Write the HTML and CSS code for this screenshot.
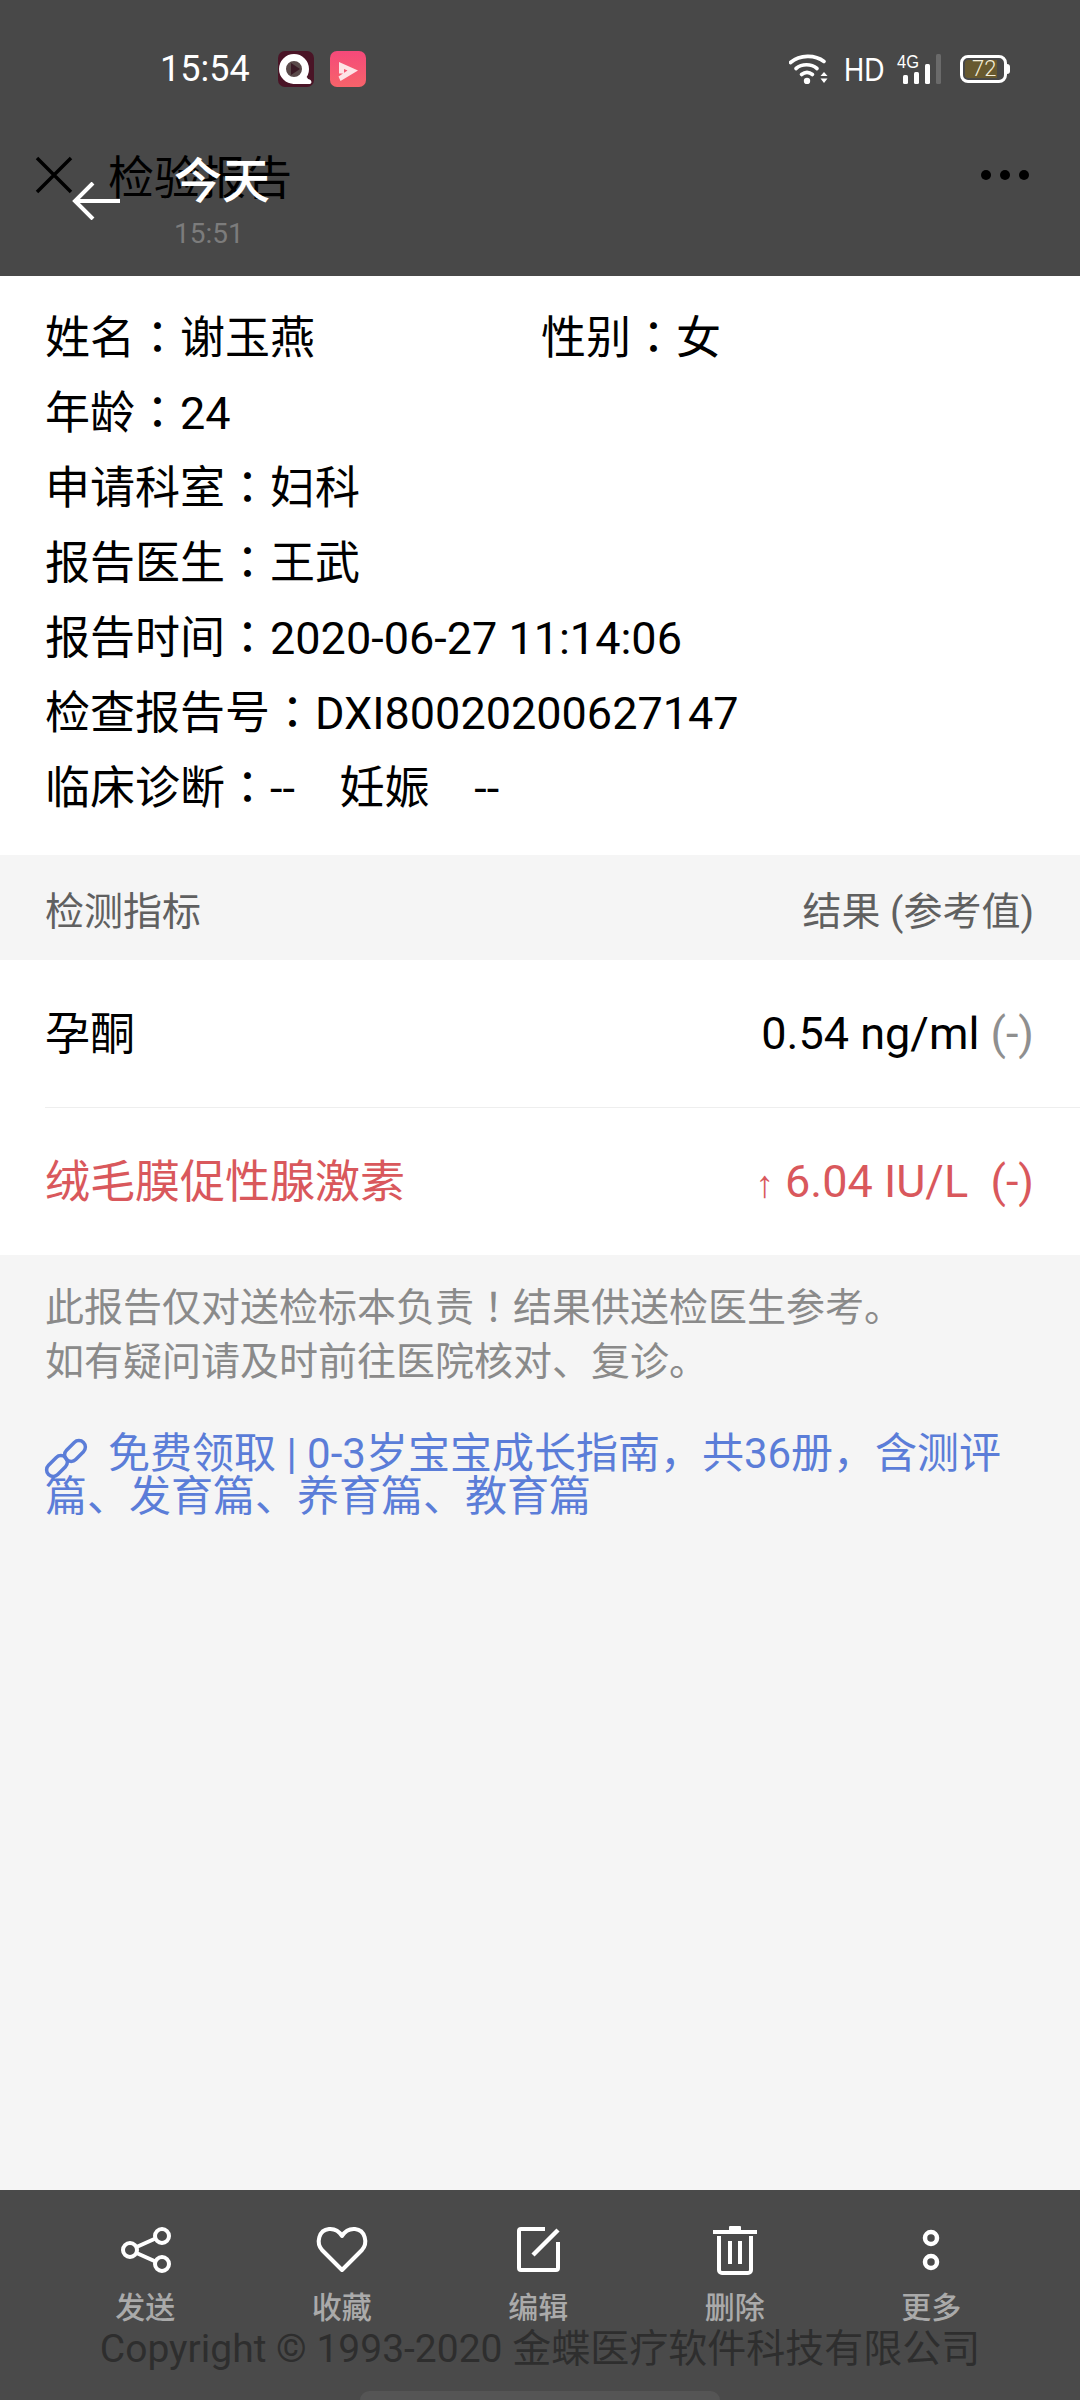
FILE: index.html
```html
<!DOCTYPE html>
<html lang="zh-CN">
<head>
<meta charset="utf-8">
<title>检验报告</title>
<link rel="stylesheet" href="styles.css">
</head>
<body>
<div class="app">
  <header class="top">
    <div class="status">
      <span class="time">15:54</span>
      <svg class="app-icon" viewBox="0 0 36 36"><rect width="36" height="36" rx="7" fill="#4a1426"/><circle cx="16" cy="18" r="11.500" fill="#5a4a4a" stroke="#fff" stroke-width="7"/><path d="M13 12l9 6-9 6z" fill="#3a1a25"/><path d="M15 33c-2-4 3-8 7-5 2-4 7-3 8 0 3 0 5 4 2 5z" fill="#fff"/></svg>
      <svg class="app-icon" viewBox="0 0 36 36"><defs><linearGradient id="pk" x1="0" y1="0" x2="0" y2="1"><stop offset="0" stop-color="#f5497a"/><stop offset="1" stop-color="#f7636a"/></linearGradient></defs><rect width="36" height="36" rx="7" fill="url(#pk)"/><path d="M9 11L28 19.500 10.500 30 8.500 25.500 17.500 19.500 14 18v4.500H9z" fill="#fde3e6"/></svg>
      <span class="status-right">
        <svg class="wifi" viewBox="0 0 40 30"><g fill="none" stroke="#fff" stroke-width="3.600" stroke-linecap="round"><path d="M1.500 8.500C11 .5 26 .5 35 7.500"/><path d="M7 14.500c6-5 15-5 21 0"/><path d="M12.500 20.500c3.500-2.800 7.500-2.800 11 0"/></g><circle cx="18" cy="27" r="3.200" fill="#fff"/><path d="M31.500 22l3.500-4 3.500 4zM31.500 24.500h7l-3.500 4.500z" fill="#fff"/></svg>
        <span class="hd">HD</span>
        <svg class="signal" viewBox="0 0 44 30"><text class="signal-text" x="0" y="14" textLength="22" lengthAdjust="spacingAndGlyphs">4G</text><g fill="#fff"><rect x="6" y="21" width="5" height="9" rx="1.500"/><rect x="17" y="18" width="5" height="12" rx="1.500"/><rect x="28" y="10" width="5" height="20" rx="1.500"/></g><rect x="39" y="0" width="5" height="30" rx="1.500" fill="#6a6a6a"/></svg>
        <span class="battery"><span class="battery-level">72</span></span>
      </span>
    </div>
    <span class="nav-close"><svg viewBox="0 0 38 38"><path d="M2 2l34 34M36 2L2 36" fill="none" stroke="#000" stroke-width="3.500"/></svg></span>
    <span class="nav-title">检验报告</span>
    <span class="nav-back"><svg viewBox="0 0 48 38"><path d="M48 19H3M21 1L3 19l18 18" fill="none" stroke="#fff" stroke-width="4"/></svg></span>
    <div class="today"><span class="today-title">今天</span><span class="today-time">15:51</span></div>
    <span class="nav-more"><i></i><i></i><i></i></span>
  </header>

  <main class="main">
    <section class="info">
      <div class="info-row info-split"><span class="info-half">姓名<span class="tc" lang="zh-TW">：</span>谢玉燕</span><span>性别<span class="tc" lang="zh-TW">：</span>女</span></div>
      <div class="info-row">年龄<span class="tc" lang="zh-TW">：</span>24</div>
      <div class="info-row">申请科室<span class="tc" lang="zh-TW">：</span>妇科</div>
      <div class="info-row">报告医生<span class="tc" lang="zh-TW">：</span>王武</div>
      <div class="info-row">报告时间<span class="tc" lang="zh-TW">：</span>2020-06-27 11:14:06</div>
      <div class="info-row">检查报告号<span class="tc" lang="zh-TW">：</span>DXI80020200627147</div>
      <div class="info-row">临床诊断<span class="tc" lang="zh-TW">：</span>--&nbsp;&nbsp;&nbsp;&nbsp;妊娠&nbsp;&nbsp;&nbsp;&nbsp;--</div>
    </section>

    <div class="table-head"><span>检测指标</span><span>结果 (参考值)</span></div>
    <section class="results">
      <div class="result"><span class="result-name">孕酮</span><span>0.54 ng/ml <span class="ref">(-)</span></span></div>
      <div class="result result-high"><span class="result-name">绒毛膜促性腺激素</span><span><span class="up">↑</span> 6.04 IU/L&nbsp;&nbsp;(-)</span></div>
    </section>

    <p class="note">此报告仅对送检标本负责<span class="tc" lang="zh-TW">！</span>结果供送检医生参考。<br>如有疑问请及时前往医院核对、复诊。</p>
    <p class="promo"><svg class="link-icon" viewBox="0 0 46 50"><g fill="none" stroke="#5b7dd8" stroke-width="3.500"><rect x="19" y="8.500" width="24" height="13" rx="6.500" transform="rotate(-45 31 15)"/><rect x="1" y="23.500" width="24" height="13" rx="6.500" transform="rotate(-45 13 30)"/></g></svg>免费领取 | 0-3岁宝宝成长指南，共36册，含测评篇、发育篇、养育篇、教育篇</p>
  </main>

  <footer class="bottom">
    <nav class="actions">
      <div class="action"><svg viewBox="0 0 56 56"><g fill="none" stroke="#fff" stroke-width="4"><circle cx="13" cy="28" r="7"/><circle cx="45" cy="14" r="7"/><circle cx="45" cy="42" r="7"/><path d="M19.500 25l19-8.500M19.500 31l19 8.500"/></g></svg><span>发送</span></div>
      <div class="action"><svg viewBox="0 0 56 56"><path d="M28 48L8 28C2 21 4.500 8 15 7c6-.5 10 2 13 7 3-5 7-7.500 13-7 10.500 1 13 14 7 21z" fill="none" stroke="#fff" stroke-width="4" stroke-linejoin="round"/></svg><span>收藏</span></div>
      <div class="action"><svg viewBox="0 0 56 56"><path d="M35 7H11a2 2 0 0 0-2 2v37a2 2 0 0 0 2 2h35a2 2 0 0 0 2-2V20" fill="none" stroke="#fff" stroke-width="4"/><path d="M48 8L23 33" fill="none" stroke="#fff" stroke-width="4.500"/></svg><span>编辑</span></div>
      <div class="action"><svg viewBox="0 0 56 56"><path d="M6 10h44" fill="none" stroke="#fff" stroke-width="4"/><path d="M22 8V5a1 1 0 0 1 1-1h10a1 1 0 0 1 1 1v3z" fill="#fff"/><path d="M12 14v34a3 3 0 0 0 3 3h26a3 3 0 0 0 3-3V14" fill="none" stroke="#fff" stroke-width="4"/><path d="M23 19v23M33 19v23" fill="none" stroke="#fff" stroke-width="4"/></svg><span>删除</span></div>
      <div class="action"><svg viewBox="0 0 56 56"><g fill="none" stroke="#fff" stroke-width="4.500"><circle cx="28" cy="16" r="6"/><circle cx="28" cy="40" r="6"/></g></svg><span>更多</span></div>
    </nav>
    <div class="copyright">Copyright © 1993-2020 金蝶医疗软件科技有限公司</div>
    <div class="home-bar"></div>
  </footer>
</div>
</body>
</html>
```

FILE: styles.css
```css
* { box-sizing: border-box; }
html, body { margin: 0; padding: 0; }
body {
  width: 1080px;
  height: 2400px;
  overflow: hidden;
  font-family: Roboto, "Noto Sans CJK SC", sans-serif;
  color: #000;
  background: #f5f5f5;
}
.app { height: 2400px; display: flex; flex-direction: column; }
.tc { font-family: "Noto Sans CJK TC", sans-serif; }

/* Top bar */
.top { position: relative; height: 276px; background: #484848; flex: none; }
.status { display: flex; align-items: center; height: 87px; padding: 51px 0 0 160px; }
.time { color: #fff; font-size: 36px; line-height: 36px; width: 118px; }
.app-icon { width: 36px; height: 36px; margin-right: 16px; }
.status-right { margin-left: auto; margin-right: 73px; display: flex; align-items: center; }
.wifi { width: 40px; height: 30px; margin-right: 15px; }
.hd { color: #fff; font-family: "Liberation Sans", sans-serif; font-size: 34px; line-height: 36px; width: 53px; transform: scaleX(.82); transform-origin: left center; }
.signal { width: 44px; height: 30px; margin-right: 19px; overflow: visible; }
.signal-text { font-family: "Liberation Sans", sans-serif; font-size: 19px; fill: #fff; }
.battery { position: relative; width: 47px; height: 28px; border: 3px solid #fff; border-radius: 8px; padding: 2px; display: block; }
.battery::after { content: ""; position: absolute; right: -6px; top: 6px; width: 3px; height: 10px; background: #fff; border-radius: 0 3px 3px 0; }
.battery-level { display: block; height: 18px; width: 32px; background: #67592f; border-radius: 3px 0 0 3px; color: #f3edd9; font-size: 22px; line-height: 18px; font-weight: 300; white-space: nowrap; text-indent: 7px; }

.nav-close { position: absolute; left: 35px; top: 156px; width: 38px; height: 38px; }
.nav-close svg, .nav-back svg { display: block; width: 100%; height: 100%; }
.nav-title { position: absolute; left: 108px; top: 145px; font-size: 46px; line-height: 66px; color: #000; white-space: nowrap; }
.nav-back { position: absolute; left: 72px; top: 182px; width: 48px; height: 38px; }
.today { position: absolute; left: 174px; top: 149px; display: flex; flex-direction: column; align-items: flex-start; }
.today-title { color: #fff; font-size: 48px; line-height: 66px; font-weight: 500; white-space: nowrap; }
.today-time { color: #7c7c7c; font-size: 28px; line-height: 38px; }
.nav-more { position: absolute; left: 981px; top: 170px; display: flex; gap: 9px; }
.nav-more i { display: block; width: 10px; height: 10px; border-radius: 50%; background: #000; }

/* Main */
.main { flex: 1; min-height: 0; display: flex; flex-direction: column; background: #f5f5f5; }
.info { background: #fff; padding: 21px 46px 33px 45px; font-size: 45px; }
.info-row { height: 75px; line-height: 75px; white-space: nowrap; }
.info-split { display: flex; }
.info-half { width: 496px; }
.table-head { height: 105px; padding: 0 46px 0 45px; display: flex; justify-content: space-between; align-items: center; font-size: 39px; color: #606060; }
.results { background: #fff; padding-left: 45px; font-size: 45px; }
.result { height: 147px; padding-right: 46px; display: flex; justify-content: space-between; align-items: center; }
.result + .result { height: 148px; border-top: 1px solid #eee; }
.result-name { margin-bottom: 6px; }
.ref { color: #8f8f8f; }
.result-high { color: #d9585c; }
.up { font-family: "Liberation Sans", sans-serif; font-size: 38px; }
.note { margin: 0; padding: 22px 46px 0 45px; font-size: 39px; line-height: 54px; color: #8a8a8a; }
.promo { position: relative; margin: 43px 46px 0 45px; font-size: 42px; line-height: 43px; color: #5b7dd8; text-indent: 63px; }
.link-icon { position: absolute; left: -1px; top: 4px; width: 46px; height: 50px; }

/* Bottom */
.bottom { position: relative; height: 210px; flex: none; background: #4a4a4a; }
.actions { display: grid; grid-template-columns: repeat(5, 196.500px); padding: 32px 0 0 47px; }
.action { display: flex; flex-direction: column; align-items: center; color: #aaa; font-size: 30px; font-weight: 500; }
.action svg { width: 56px; height: 56px; display: block; }
.action span { line-height: 40px; margin-top: 10px; }
.copyright { text-align: center; margin: -1px 0 0; font-size: 39px; line-height: 44px; color: #2e2e2e; white-space: nowrap; }
.home-bar { position: absolute; left: 360px; bottom: -10px; width: 360px; height: 19px; border-radius: 10px; background: #555; }
```
